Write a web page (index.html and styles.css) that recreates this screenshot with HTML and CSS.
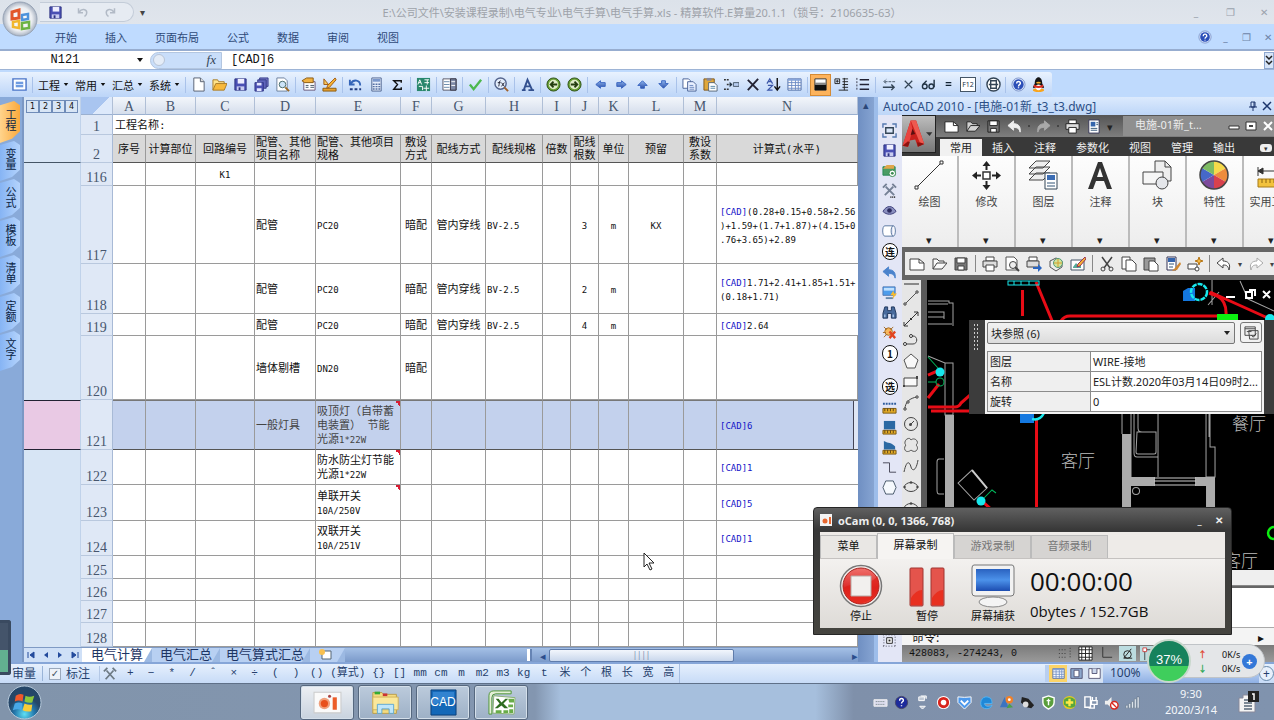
FILE: index.html
```html
<!DOCTYPE html>
<html lang="zh-CN">
<head>
<meta charset="utf-8">
<title>电气手算.xls - 精算软件.E算量</title>
<link rel="stylesheet" href="styles.css">
</head>
<body>
<svg class="defs" aria-hidden="true">
  <defs>
    <linearGradient id="g-blue" x1="0" y1="0" x2="0" y2="1"><stop offset="0" stop-color="#8fb6f0"/><stop offset="1" stop-color="#2c50a8"/></linearGradient>
    <linearGradient id="g-red" x1="0" y1="0" x2="0" y2="1"><stop offset="0" stop-color="#f0706c"/><stop offset=".55" stop-color="#dc2a28"/><stop offset="1" stop-color="#f04838"/></linearGradient>
    <linearGradient id="g-screen" x1="0" y1="0" x2="0" y2="1"><stop offset="0" stop-color="#2a62c0"/><stop offset=".5" stop-color="#4c92ea"/><stop offset="1" stop-color="#1c4cb0"/></linearGradient>
    <radialGradient id="g-orb"><stop offset="0" stop-color="#fff"/><stop offset=".7" stop-color="#eceef2"/><stop offset="1" stop-color="#a9b3c2"/></radialGradient>
    <radialGradient id="g-win" cy=".85"><stop offset="0" stop-color="#5fe0f4"/><stop offset=".6" stop-color="#2478ac"/><stop offset="1" stop-color="#254668"/></radialGradient>
  </defs>
  <symbol id="save" viewBox="0 0 16 16"><path d="M2 2h12v12H2z" fill="#4a50b4" stroke="#2d3280"/><path d="M5 2h7v5H5z" fill="#eef"/><path d="M4 10h8v4H4z" fill="#c8ccf0"/><path d="M6 11h2v3H6z" fill="#2d3280"/></symbol>
  <symbol id="saveall" viewBox="0 0 16 16"><path d="M6 1h9v9H6z" fill="#777cc8" stroke="#333a88"/><path d="M4 3h9v9H4z" fill="#6066bc" stroke="#333a88"/><path d="M1 6h9v9H1z" fill="#4a50b4" stroke="#333a88"/><path d="M3 6h5v3H3zM3 12h5v3H3z" fill="#e4e6ff"/></symbol>
  <symbol id="undo" viewBox="0 0 16 16"><path d="M2 3v6h6M3 8c3-5 10-4 10 1 0 2-1 4-3 5" fill="none" stroke="currentColor" stroke-width="2"/></symbol>
  <symbol id="redo" viewBox="0 0 16 16"><path d="M14 3v6H8M13 8C10 3 3 4 3 9c0 2 1 4 3 5" fill="none" stroke="currentColor" stroke-width="2"/></symbol>
  <symbol id="arrowundo" viewBox="0 0 16 16"><path d="M1 7l6-5v3c5 0 8 3 7 9-1-4-3-5-7-5v3z" fill="currentColor" stroke="currentColor" stroke-linejoin="round"/></symbol>
  <symbol id="arrowredo" viewBox="0 0 16 16"><path d="M15 7L9 2v3c-5 0-8 3-7 9 1-4 3-5 7-5v3z" fill="currentColor" stroke="currentColor" stroke-linejoin="round"/></symbol>
  <symbol id="lineundo" viewBox="0 0 16 16"><path d="M1 7l6-5v3c5 0 8 3 6 9-1-4-2-5-6-5v3z" fill="#fff" stroke="currentColor"/></symbol>
  <symbol id="lineredo" viewBox="0 0 16 16"><path d="M15 7L9 2v3c-5 0-8 3-6 9 1-4 2-5 6-5v3z" fill="#fff" stroke="currentColor"/></symbol>
  <symbol id="list" viewBox="0 0 16 16"><path d="M1 2h14v12H1z" fill="#fff" stroke="#4a74c8" stroke-width="1.5"/><path d="M4 5h8v6H4z" fill="#6f9be0"/><path d="M4 8h8" stroke="#dceaff"/></symbol>
  <symbol id="new" viewBox="0 0 16 16"><path d="M3 1h7l4 4v10H3z" fill="#fff" stroke="#555f70"/><path d="M10 1v4h4" fill="#ddd" stroke="#555f70"/></symbol>
  <symbol id="open" viewBox="0 0 16 16"><path d="M1 14V3h5l1 2h6v3" fill="#ffe48c" stroke="#a87b28"/><path d="M1 14l3-7h12l-3 7z" fill="#f8b93c" stroke="#a87b28"/></symbol>
  <symbol id="preview" viewBox="0 0 16 16"><path d="M2 1h8l3 3v11H2z" fill="#fff" stroke="#6b7f9c"/><circle cx="8" cy="8" r="3.5" fill="#cde4f8" stroke="#466"/><path d="M11 11l4 4" stroke="#9b6a28" stroke-width="2"/></symbol>
  <symbol id="c-preview" viewBox="0 0 16 16"><path d="M2 1h8l3 3v10H2z" fill="#fff" stroke="#555"/><circle cx="9" cy="9" r="3.5" fill="#eee" stroke="#444"/><path d="M11 11l4 4" stroke="#444" stroke-width="2"/></symbol>
  <symbol id="props" viewBox="0 0 16 16"><path d="M3 5h12v9H3z" fill="#fff" stroke="#657"/><path d="M1 4l5-3h7v5H4z" fill="#f0b040" stroke="#8a5a10"/><path d="M5 9h3m2 0h4M5 11h3m2 0h4" stroke="#456"/></symbol>
  <symbol id="design" viewBox="0 0 16 16"><path d="M2 2l5 6h-5z" fill="#f8c85c" stroke="#a05a10"/><path d="M1 12h14v3H1z" fill="#e8a02c" stroke="#8a5a10"/><path d="M14 1l-8 8-1 3 3-1 7-8z" fill="#f8b434" stroke="#a05a10"/></symbol>
  <symbol id="undodot" viewBox="0 0 16 16"><path d="M2 3v5h5M3 7c3-5 10-4 10 2" fill="none" stroke="#3565b8" stroke-width="2"/><path d="M2 13h12" stroke="#223c80" stroke-width="2" stroke-dasharray="3 2"/></symbol>
  <symbol id="calc" viewBox="0 0 16 16"><path d="M3 1h10v14H3z" fill="#e5ecfa" stroke="#4e6490"/><path d="M4 2h8v3H4z" fill="#7b98cc"/><path d="M5 7v7M8 7v7M11 7v7" stroke="#5670a4" stroke-width="2" stroke-dasharray="1.5 1"/></symbol>
  <symbol id="sigma" viewBox="0 0 16 16"><path d="M12 6V4H4l4 4-4 5h8v-2" fill="none" stroke="#111" stroke-width="1.500"/></symbol>
  <symbol id="translate" viewBox="0 0 16 16"><path d="M1 1h14v14H1z" fill="#29876c"/><path d="M2 8l2-5 2 5M3 6h2M9 3h5M9 6h5M12 3v5M3 10h4v4M8 12h6M11 9v6" stroke="#fff" fill="none"/></symbol>
  <symbol id="sheetlist" viewBox="0 0 16 16"><path d="M1 2h14v12H1z" fill="#fff" stroke="#556"/><path d="M9 2h6v12H9z" fill="#7e8aa8" stroke="#334"/><path d="M2 5h6M2 8h6M2 11h6" stroke="#68a"/><path d="M10 5h4M10 9h4" stroke="#fff"/></symbol>
  <symbol id="check" viewBox="0 0 16 16"><path d="M2 8l4 5 8-10" fill="none" stroke="#4cb84e" stroke-width="2.5"/></symbol>
  <symbol id="fxzoom" viewBox="0 0 16 16"><circle cx="7" cy="7" r="6" fill="#e4eefc" stroke="#54648c" stroke-width="1.5"/><path d="M11 11l4 4" stroke="#a0622c" stroke-width="2"/><path d="M7 4c-2 0-1 4-2 6M4 6h3M8 6l3 4M11 6l-3 4" stroke="#223" fill="none"/></symbol>
  <symbol id="fontA" viewBox="0 0 16 16"><path d="M2 14h4M9 14h6M4 14L8 3l5 11M5 10h6" fill="none" stroke="#33508f" stroke-width="2"/></symbol>
  <symbol id="prev" viewBox="0 0 16 16"><circle cx="8" cy="8" r="7" fill="#6aa136" stroke="#2c4e14"/><circle cx="8" cy="8" r="5" fill="#dfecc8"/><path d="M12 8H5m3-3L5 8l3 3" stroke="#243c10" stroke-width="2" fill="none"/></symbol>
  <symbol id="next" viewBox="0 0 16 16"><circle cx="8" cy="8" r="7" fill="#6aa136" stroke="#2c4e14"/><circle cx="8" cy="8" r="5" fill="#dfecc8"/><path d="M4 8h7M8 5l3 3-3 3" stroke="#243c10" stroke-width="2" fill="none"/></symbol>
  <symbol id="left" viewBox="0 0 16 16"><path d="M3 8l5-4v2h5v4H8v2z" fill="url(#g-blue)" stroke="#3863c0"/></symbol>
  <symbol id="right" viewBox="0 0 16 16"><path d="M13 8L8 4v2H3v4h5v2z" fill="url(#g-blue)" stroke="#3863c0"/></symbol>
  <symbol id="up" viewBox="0 0 16 16"><path d="M8 4l5 5h-3v3H6V9H3z" fill="url(#g-blue)" stroke="#3863c0"/></symbol>
  <symbol id="down" viewBox="0 0 16 16"><path d="M8 12l5-5h-3V4H6v3H3z" fill="url(#g-blue)" stroke="#3863c0"/></symbol>
  <symbol id="copy" viewBox="0 0 16 16"><path d="M1 2h6l2 2v8H1z" fill="#fff" stroke="#4a6296"/><path d="M6 5h6l3 3v7H6z" fill="#e8f0ff" stroke="#4a6296"/><path d="M8 9h4M8 11h5M8 13h5" stroke="#6a88c0"/></symbol>
  <symbol id="paste" viewBox="0 0 16 16"><path d="M1 2h11v12H1z" fill="#e0a83c" stroke="#80581c"/><path d="M4 1h5v3H4z" fill="#889"/><path d="M6 6h6l3 3v6H6z" fill="#fff" stroke="#567"/><path d="M8 10h5M8 12h5" stroke="#58a"/></symbol>
  <symbol id="insrow" viewBox="0 0 16 16"><path d="M0 3h6M0 13h6M3 8h6" stroke="#333" stroke-width="1.5" stroke-dasharray="2 1"/><path d="M6 5l3 3-3 3" fill="#234"/><path d="M10 6h6v4h-6z" fill="#b6ccf0" stroke="#456"/></symbol>
  <symbol id="cross" viewBox="0 0 16 16"><path d="M3 3l11 11M14 2L3 14" stroke="#223" stroke-width="2"/></symbol>
  <symbol id="sort" viewBox="0 0 16 16"><path d="M1 7l3-5 3 5M2 5h4M2 9h5l-5 5h5" fill="none" stroke="#3b56a8" stroke-width="1.3"/><path d="M12 1v12M9 10l3 4 3-4" fill="none" stroke="#111" stroke-width="1.5"/></symbol>
  <symbol id="grid" viewBox="0 0 16 16"><path d="M1 2h14v12H1z" fill="#fff" stroke="#4c6aa4"/><path d="M1 6h14M1 9h14M1 12h14M5 2v12M9 2v12M12 2v12" stroke="#6d8cc4"/><path d="M1 2h14v2H1z" fill="#86a4da"/></symbol>
  <symbol id="halves" viewBox="0 0 16 16"><path d="M2 2h12v12H2z" fill="#fff" stroke="#333"/><path d="M2 8h12v6H2z" fill="#111"/><path d="M2 6h12v2H2z" fill="#888"/></symbol>
  <symbol id="tree" viewBox="0 0 16 16"><path d="M1 2h5v5H1zM2 4.500h3M3.500 3v3M9 2h6M9 5h6M9 8h6M9 11h6M5 14h10M11 1v13" fill="none" stroke="#222"/></symbol>
  <symbol id="lines" viewBox="0 0 16 16"><path d="M5 3h10M5 8h10M5 13h10" stroke="#223" stroke-width="1.5"/><path d="M2 1v14" stroke="#334" stroke-dasharray="2 1.500"/></symbol>
  <symbol id="swap" viewBox="0 0 16 16"><path d="M15 5H3l3-3M3 5l3 2" fill="none" stroke="#456" stroke-dasharray="3 1"/><path d="M2 11h12M11 8l3 3-3 3" fill="none" stroke="#345" stroke-width="1.5"/></symbol>
  <symbol id="times" viewBox="0 0 16 16"><path d="M4 4l8 8M12 4l-8 8" stroke="#345" stroke-width="1.3"/></symbol>
  <symbol id="glasses" viewBox="0 0 16 16"><path d="M6 4L2 8M14 3v8" stroke="#234" stroke-width="1.5"/><circle cx="4" cy="10" r="2.500" fill="none" stroke="#234" stroke-width="1.500"/><circle cx="11" cy="10" r="2.500" fill="none" stroke="#234" stroke-width="1.500"/></symbol>
  <symbol id="equals" viewBox="0 0 16 16"><path d="M5 6h6M5 9h6" stroke="#123" stroke-width="1.300"/></symbol>
  <symbol id="calccirc" viewBox="0 0 16 16"><circle cx="8" cy="8" r="7" fill="#fff" stroke="#345" stroke-width="1.5"/><path d="M5 4h6v8H5zM3 8h10" fill="none" stroke="#345" stroke-width="1.500"/></symbol>
  <symbol id="help" viewBox="0 0 16 16"><circle cx="8" cy="8" r="7" fill="#d8e4fa" stroke="#8098cc"/><circle cx="8" cy="8" r="5.500" fill="#2c4fb8"/><path d="M6 7c0-3 4-3 4 0 0 1-2 1-2 3M8 11v1" stroke="#fff" stroke-width="1.500" fill="none"/></symbol>
  <symbol id="qq" viewBox="0 0 16 16"><ellipse cx="8" cy="14" rx="6" ry="2" fill="#f8a41c"/><path d="M4 7c0-9 8-9 8 0l2 4-1 1-2-1c-1 3-5 3-6 0l-2 1-1-1z" fill="#151515"/><ellipse cx="8" cy="11" rx="3" ry="3" fill="#fff"/><path d="M3 8c3 2 7 2 10 0v3c-3 1-7 1-10 0z" fill="#e02c20"/><ellipse cx="8" cy="6" rx="2.500" ry="1" fill="#f8b028"/></symbol>
  <symbol id="fit" viewBox="0 0 16 16"><path d="M1 5V1h4M11 1h4v4M15 11v4h-4M5 15H1v-4" fill="none" stroke="#567ab0" stroke-width="1.500"/><path d="M4 5h8v6H4z" fill="#dce8fa" stroke="#345" stroke-width="1.500"/></symbol>
  <symbol id="picadd" viewBox="0 0 16 16"><path d="M1 4h13v9H1z" fill="#4a9c64" stroke="#285"/><path d="M1 6l4-4h8v4z" fill="#e0a64c"/><circle cx="11" cy="11" r="3.500" fill="#fff" stroke="#3a8a50"/><circle cx="11" cy="11" r="1.500" fill="#3a8a50"/></symbol>
  <symbol id="tools" viewBox="0 0 16 16"><path d="M3 13L12 4M4 4l9 9M1 5l4-4M11 1l4 4" stroke="#758196" stroke-width="2"/><path d="M9 15h6" stroke="#222" stroke-width="2" stroke-dasharray="1 1"/></symbol>
  <symbol id="wrench" viewBox="0 0 16 16"><path d="M3 14L12 4M4 4l9 10M1 5l4-4M11 1l4 4" stroke="#6d7a84" stroke-width="2"/></symbol>
  <symbol id="eye" viewBox="0 0 16 16"><path d="M1 9c4-7 10-7 14 0-4 4-10 4-14 0z" fill="#8b90c0" stroke="#3a3c78"/><circle cx="8" cy="8" r="2.500" fill="#2c2c60"/></symbol>
  <symbol id="cyl" viewBox="0 0 16 16"><path d="M3 3h9c3 0 3 11 0 11H3C0 14 0 3 3 3zM12 3c-3 0-3 11 0 11" fill="#fff" stroke="#56749e"/></symbol>
  <symbol id="monitor" viewBox="0 0 16 16"><path d="M1 2h13v9H1z" fill="#4c9cec" stroke="#5079b4"/><path d="M2 3h11v3H2z" fill="#bfe0ff"/><path d="M4 14h8" stroke="#68a" stroke-width="2"/><path d="M12 6l-3 5h3l-1 4 5-6h-3z" fill="#f8bc2c"/></symbol>
  <symbol id="bino" viewBox="0 0 16 16"><path d="M3 2h3v4h4V2h3l2 7v5h-5V9H6v5H1V9z" fill="#486a9c" stroke="#1e355c"/><path d="M3 10v3M12 10v3" stroke="#a8c4e8" stroke-width="1.500"/></symbol>
  <symbol id="bugx" viewBox="0 0 16 16"><circle cx="7" cy="7" r="4" fill="#f8b85c" stroke="#a06a28"/><path d="M2 2l3 3M12 2L9 5M1 8h3M2 13l3-3" stroke="#a06a28"/><path d="M8 7l6 7M14 7l-6 7" stroke="#e24420" stroke-width="2.500"/></symbol>
  <symbol id="rulerd" viewBox="0 0 16 16"><path d="M1 4h14" stroke="#2d5b9c" stroke-width="2" stroke-dasharray="2 1"/><path d="M1 9h14v5H1z" fill="#e4ac28" stroke="#7a5810"/><path d="M3 9v3M6 9v3M9 9v3M12 9v3" stroke="#5a4010"/></symbol>
  <symbol id="rulerb" viewBox="0 0 16 16"><path d="M2 1h12v9H2z" fill="#2b69a4"/><path d="M1 11h14v4H1z" fill="#e4ac28" stroke="#7a5810"/><path d="M3 11v3M6 11v3M9 11v3M12 11v3" stroke="#5a4010"/></symbol>
  <symbol id="rulert" viewBox="0 0 16 16"><path d="M2 1c5 3 8 1 12 6v3H2z" fill="#2b69a4"/><path d="M1 11h14v4H1z" fill="#e4ac28" stroke="#7a5810"/><path d="M3 11v3M6 11v3M9 11v3M12 11v3" stroke="#5a4010"/></symbol>
  <symbol id="step" viewBox="0 0 16 16"><path d="M1 3h7v10h7" fill="none" stroke="#445"/></symbol>
  <symbol id="hex" viewBox="0 0 16 16"><path d="M4 1h8l3 7-3 7H4L1 8z" fill="#f6f9fd" stroke="#456"/></symbol>
  <symbol id="dotgrid" viewBox="0 0 16 16"><path d="M5 5h6v6H5z" fill="#fff" stroke="#222"/><path d="M1 2h14M1 14h14M2 1v14M14 1v14" stroke="#445" stroke-dasharray="1 2"/><path d="M8 7v2" stroke="#222" stroke-width="2"/></symbol>
  <symbol id="pline" viewBox="0 0 16 16"><path d="M2 14L14 2" stroke="#555"/><path d="M1 13h2v2H1zM13 1h2v2h-2z" fill="#fff" stroke="#444"/></symbol>
  <symbol id="ray" viewBox="0 0 16 16"><path d="M1 15L15 1M15 1h-4M15 1v4M1 15v-4M1 15h4" fill="none" stroke="#333"/><path d="M7 7h2v2H7z" fill="#333"/></symbol>
  <symbol id="poly" viewBox="0 0 16 16"><path d="M1 12h9c5 0 5-8 0-8H8" fill="none" stroke="#444"/><circle cx="2" cy="12" r="1.500" fill="#fff" stroke="#333"/><circle cx="8" cy="4" r="1.500" fill="#fff" stroke="#333"/></symbol>
  <symbol id="pent" viewBox="0 0 16 16"><path d="M8 1l7 6-3 8H4L1 7z" fill="#f8f8f8" stroke="#555"/></symbol>
  <symbol id="rect" viewBox="0 0 16 16"><path d="M1 4h13v8H1z" fill="#fafafa" stroke="#444"/><path d="M0 11h2v2H0zM13 2h2v3h-2z" fill="#444"/></symbol>
  <symbol id="arc" viewBox="0 0 16 16"><path d="M2 14C2 7 7 3 14 2" fill="none" stroke="#444"/><path d="M1 13h2v2H1zM13 1h2v2h-2zM4 6h2v2H4z" fill="#fff" stroke="#444"/></symbol>
  <symbol id="circ" viewBox="0 0 16 16"><circle cx="8" cy="8" r="6.500" fill="none" stroke="#444"/><path d="M7 9l4-4" stroke="#444"/><circle cx="7.500" cy="8.500" r="1.500" fill="#444"/></symbol>
  <symbol id="cloud" viewBox="0 0 16 16"><path d="M4 2c2-1 3-1 4 1 2-2 5-1 6 1 1 2 0 3-1 4 2 2 2 4 0 6-2 1-4 0-5-1-2 2-5 2-6 0-1-2 0-4 1-5-2-1-1-5 1-6z" fill="none" stroke="#555"/></symbol>
  <symbol id="spline" viewBox="0 0 16 16"><path d="M1 14C4 0 7 5 8 9s5 5 7-7" fill="none" stroke="#444"/></symbol>
  <symbol id="ell" viewBox="0 0 16 16"><ellipse cx="8" cy="8" rx="6.500" ry="4.500" fill="none" stroke="#444"/><circle cx="1.500" cy="8" r="1.200" fill="#444"/><circle cx="14.500" cy="8" r="1.200" fill="#444"/><circle cx="8" cy="3.500" r="1.200" fill="#444"/></symbol>
  <symbol id="c-new" viewBox="0 0 16 16"><path d="M1 3h9l5 4v7H1z" fill="#fff" stroke="currentColor"/><path d="M10 3v4h5" fill="none" stroke="currentColor"/></symbol>
  <symbol id="c-open" viewBox="0 0 16 16"><path d="M2 13V3h4l2 2h5v2M2 13l4-6h10l-5 6z" fill="#fff" stroke="currentColor" fill-opacity=".7"/></symbol>
  <symbol id="c-save" viewBox="0 0 16 16"><path d="M2 2h12v12H2z" fill="#777" stroke="currentColor"/><path d="M4 2h8v5H4zM5 10h6v4H5z" fill="#fff" stroke="currentColor"/></symbol>
  <symbol id="c-print" viewBox="0 0 16 16"><path d="M4 1h8v4H4z" fill="#fff" stroke="currentColor"/><path d="M1 5h14v6H1z" fill="#ddd" stroke="currentColor"/><path d="M4 9h8v6H4z" fill="#fff" stroke="currentColor"/></symbol>
  <symbol id="c-page" viewBox="0 0 16 16"><path d="M3 1h11v14H3z" fill="#fff" stroke="#335"/><path d="M5 3h5v5H5z" fill="#3464ac"/><path d="M11 4h2M11 6h2M5 10h7M5 12h7" stroke="#357"/></symbol>
  <symbol id="c-publish" viewBox="0 0 16 16"><path d="M3 1h8v4H3z" fill="#fff" stroke="#444"/><path d="M1 5h12v6H1z" fill="#ddd" stroke="#444"/><path d="M7 11h5V8l4 4-4 4v-3H7z" fill="#2c66c0"/></symbol>
  <symbol id="c-globe" viewBox="0 0 16 16"><path d="M2 5l6-3 6 3v6l-6 4-6-4z" fill="#eee" stroke="#555"/><circle cx="10" cy="7" r="4.500" fill="#cfe59c" stroke="#597"/><path d="M10 3v8M6 7h8" stroke="#d6a030"/></symbol>
  <symbol id="c-edit" viewBox="0 0 16 16"><path d="M1 4h13v10H1z" fill="#fff" stroke="#456"/><path d="M3 11l3-4 2 2 3-3v6H3z" fill="#5a9"/><path d="M15 1l-7 7-1 3 3-1 6-7z" fill="#f6b234" stroke="#935"/></symbol>
  <symbol id="c-cut" viewBox="0 0 16 16"><path d="M3 1l8 11M13 1L5 12" stroke="#444" stroke-width="1.500"/><circle cx="4" cy="13" r="2" fill="none" stroke="#444"/><circle cx="12" cy="13" r="2" fill="none" stroke="#444"/></symbol>
  <symbol id="c-copy" viewBox="0 0 16 16"><path d="M1 1h8v12H1z" fill="#fff" stroke="#444"/><path d="M5 4h6l4 4v7H5z" fill="#fff" stroke="#444"/></symbol>
  <symbol id="c-paste" viewBox="0 0 16 16"><path d="M1 2h11v12H1z" fill="#999" stroke="#444"/><path d="M6 5h5l4 4v6H6z" fill="#fff" stroke="#444"/></symbol>
  <symbol id="c-match" viewBox="0 0 16 16"><path d="M2 1h9v13H2z" fill="#fff" stroke="#335"/><path d="M3 2h7v4H3z" fill="#3464ac"/><path d="M4 8h5M4 11h4" stroke="#357"/><path d="M15 6l-5 6-3 3 5-1 4-6z" fill="#d08830"/></symbol>
  <symbol id="c-star" viewBox="0 0 16 16"><path d="M1 8h9v5H1z" fill="#fff" stroke="#444"/><circle cx="10" cy="13" r="2" fill="#fff" stroke="#444"/><path d="M12 1l1 3 3 1-3 1-1 3-1-3-3-1 3-1z" fill="#f8b83c" stroke="#b87818"/></symbol>
  <symbol id="caret" viewBox="0 0 8 6"><path d="M1 1h6L4 5z" fill="currentColor"/></symbol>
</svg>

<div class="app">
  <header class="titlebar">
    <div class="orb"><svg viewBox="0 0 36 36" width="36" height="36"><circle cx="18" cy="18" r="17" fill="url(#g-orb)" stroke="#98a4b6"/><path d="M10 11l7-2v8l-7 1z" fill="none" stroke="#e2572a" stroke-width="3"/><path d="M20 14l6-1v5l-6 1z" fill="none" stroke="#4e93dc" stroke-width="2.500"/><path d="M11 21l6-1v7l-6-1z" fill="none" stroke="#f1b62c" stroke-width="2.500"/><path d="M20 22l7-1v6l-7 1z" fill="none" stroke="#6bb344" stroke-width="2.500"/></svg></div>
    <div class="quick">
      <button class="ib" aria-label="保存"><svg><use href="#save"/></svg></button>
      <button class="ib faint" aria-label="撤销"><svg><use href="#undo"/></svg></button>
      <button class="ib faint" aria-label="恢复"><svg><use href="#redo"/></svg></button>
    </div>
    <button class="more" aria-label="自定义">▾</button>
    <h1>E:\公司文件\安装课程录制\电气专业\电气手算\电气手算.xls - 精算软件.E算量20.1.1（锁号：2106635-63）</h1>
    <div class="winbtns"><button aria-label="最小化">_</button><button aria-label="还原">❐</button><button aria-label="关闭">✕</button></div>
  </header>
  <nav class="menubar">
    <a href="#">开始</a><a href="#">插入</a><a href="#">页面布局</a><a href="#">公式</a><a href="#">数据</a><a href="#">审阅</a><a href="#">视图</a>
    <div class="winbtns inner"><button aria-label="帮助"><svg width="14" height="14"><use href="#help"/></svg></button><button aria-label="最小化">_</button><button aria-label="还原">❐</button><button aria-label="关闭">✕</button></div>
  </nav>
  <div class="formulabar">
    <input class="namebox" value="N121" aria-label="名称框">
    <svg class="nbarrow"><use href="#caret"/></svg>
    <div class="fx"><i></i><b>fx</b></div>
    <input class="formula" value="[CAD]6" aria-label="编辑栏">
    <button class="expand" aria-label="展开"><svg width="8" height="12"><path d="M1 2l3 3 3-3M1 7l3 3 3-3" fill="none" stroke="#222" stroke-width="1.500"/></svg></button>
  </div>
  <div class="toolbar">
    <div class="tools">
      <button class="ib" aria-label="列表"><svg><use href="#list"/></svg></button><span class="sep"></span>
      <button class="mb">工程<svg><use href="#caret"/></svg></button><button class="mb">常用<svg><use href="#caret"/></svg></button><button class="mb">汇总<svg><use href="#caret"/></svg></button><button class="mb">系统<svg><use href="#caret"/></svg></button><span class="sep"></span>
      <button class="ib" aria-label="新建"><svg><use href="#new"/></svg></button><button class="ib" aria-label="打开"><svg><use href="#open"/></svg></button><button class="ib" aria-label="保存"><svg><use href="#save"/></svg></button><button class="ib" aria-label="全部保存"><svg><use href="#saveall"/></svg></button><button class="ib" aria-label="预览"><svg><use href="#preview"/></svg></button><span class="sep"></span>
      <button class="ib" aria-label="属性"><svg><use href="#props"/></svg></button><button class="ib" aria-label="设计"><svg><use href="#design"/></svg></button><span class="sep"></span>
      <button class="ib" aria-label="回退"><svg><use href="#undodot"/></svg></button><button class="ib" aria-label="计算"><svg><use href="#calc"/></svg></button><button class="ib" aria-label="求和"><svg><use href="#sigma"/></svg></button><span class="sep"></span>
      <button class="ib" aria-label="转换"><svg><use href="#translate"/></svg></button><span class="sep"></span>
      <button class="ib" aria-label="表单"><svg><use href="#sheetlist"/></svg></button><span class="sep"></span>
      <button class="ib" aria-label="确认"><svg><use href="#check"/></svg></button><span class="sep"></span>
      <button class="ib" aria-label="公式查看"><svg><use href="#fxzoom"/></svg></button><span class="sep"></span>
      <button class="ib" aria-label="字体"><svg><use href="#fontA"/></svg></button><span class="sep"></span>
      <button class="ib" aria-label="上一个"><svg><use href="#prev"/></svg></button><button class="ib" aria-label="下一个"><svg><use href="#next"/></svg></button><span class="sep"></span>
      <button class="ib" aria-label="左移"><svg><use href="#left"/></svg></button><button class="ib" aria-label="右移"><svg><use href="#right"/></svg></button><button class="ib" aria-label="上移"><svg><use href="#up"/></svg></button><button class="ib" aria-label="下移"><svg><use href="#down"/></svg></button><span class="sep"></span>
      <button class="ib" aria-label="复制"><svg><use href="#copy"/></svg></button><button class="ib" aria-label="粘贴"><svg><use href="#paste"/></svg></button><button class="ib" aria-label="插入行"><svg><use href="#insrow"/></svg></button><button class="ib" aria-label="删除"><svg><use href="#cross"/></svg></button><button class="ib" aria-label="排序"><svg><use href="#sort"/></svg></button><button class="ib" aria-label="表格"><svg><use href="#grid"/></svg></button><span class="sep"></span>
      <button class="ib on" aria-label="反色"><svg><use href="#halves"/></svg></button><button class="ib" aria-label="分级"><svg><use href="#tree"/></svg></button><button class="ib" aria-label="行"><svg><use href="#lines"/></svg></button><span class="sep"></span>
      <button class="ib nr" aria-label="互换"><svg><use href="#swap"/></svg></button><button class="ib nr" aria-label="乘"><svg><use href="#times"/></svg></button><button class="ib nr" aria-label="查看"><svg><use href="#glasses"/></svg></button><button class="ib nr" aria-label="等于"><svg><use href="#equals"/></svg></button><button class="ib nr f12">F12</button><span class="sep"></span>
      <button class="ib nr" aria-label="计算器"><svg><use href="#calccirc"/></svg></button><span class="sep"></span>
      <button class="ib nr" aria-label="帮助"><svg><use href="#help"/></svg></button><button class="ib nr" aria-label="QQ"><svg><use href="#qq"/></svg></button>
    </div>
  </div>

  <main class="work">
    <aside class="sidetabs">
      <button class="st on">工程</button><button class="st">变量</button><button class="st">公式</button><button class="st">模板</button><button class="st">清单</button><button class="st">定额</button><button class="st">文字</button>
      <div class="meter"></div>
    </aside>

    <section class="sheet">
      <div class="gridwrap">
      <table class="cells">
        <colgroup><col class="w57"><col class="w32"><col class="w33"><col class="w50"><col class="w59"><col class="w61"><col class="w85"><col class="w31"><col class="w54"><col class="w57"><col class="w28"><col class="w28"><col class="w30"><col class="w55"><col class="w33"><col></colgroup>
        <thead><tr class="r18"><td class="ol levels"><div><button>1</button><button>2</button><button>3</button><button>4</button></div></td><th class="corner"></th><th>A</th><th>B</th><th>C</th><th>D</th><th>E</th><th>F</th><th>G</th><th>H</th><th>I</th><th>J</th><th>K</th><th>L</th><th>M</th><th>N</th></tr></thead>
        <tbody>
        <tr class="r20"><td class="ol"></td><th>1</th><td colspan="14" class="name">工程名称:</td></tr>
        <tr class="r28 cap"><td class="ol"></td><th>2</th><td>序号</td><td>计算部位</td><td>回路编号</td><td class="l">配管、其他项目名称</td><td class="l">配管、其他项目规格</td><td>敷设方式</td><td>配线方式</td><td>配线规格</td><td>倍数</td><td>配线根数</td><td>单位</td><td>预留</td><td>敷设系数</td><td>计算式(水平)</td></tr>
        <tr class="r23"><td class="ol"></td><th>116</th><td></td><td></td><td>K1</td><td></td><td></td><td></td><td></td><td></td><td></td><td></td><td></td><td></td><td></td><td></td></tr>
        <tr class="r78"><td class="ol"></td><th>117</th><td></td><td></td><td></td><td class="l cn">配管</td><td class="l">PC20</td><td class="cn">暗配</td><td class="cn">管内穿线</td><td class="l">BV-2.5</td><td></td><td>3</td><td>m</td><td>KX</td><td></td><td class="f"><b>[CAD]</b>(0.28+0.15+0.58+2.56<br>)+1.59+(1.7+1.87)+(4.15+0<br>.76+3.65)+2.89</td></tr>
        <tr class="r50"><td class="ol"></td><th>118</th><td></td><td></td><td></td><td class="l cn">配管</td><td class="l">PC20</td><td class="cn">暗配</td><td class="cn">管内穿线</td><td class="l">BV-2.5</td><td></td><td>2</td><td>m</td><td></td><td></td><td class="f"><b>[CAD]</b>1.71+2.41+1.85+1.51+<br>(0.18+1.71)</td></tr>
        <tr class="r22"><td class="ol"></td><th>119</th><td></td><td></td><td></td><td class="l cn">配管</td><td class="l">PC20</td><td class="cn">暗配</td><td class="cn">管内穿线</td><td class="l">BV-2.5</td><td></td><td>4</td><td>m</td><td></td><td></td><td class="f"><b>[CAD]</b>2.64</td></tr>
        <tr class="r64"><td class="ol"></td><th>120</th><td></td><td></td><td></td><td class="l cn">墙体剔槽</td><td class="l">DN20</td><td class="cn">暗配</td><td></td><td></td><td></td><td></td><td></td><td></td><td></td><td></td></tr>
        <tr class="r50 sel"><td class="ol"></td><th>121</th><td></td><td></td><td></td><td class="l cn">一般灯具</td><td class="l cn note">吸顶灯（自带蓄<br>电装置） 节能<br>光源<span>1*22W</span></td><td></td><td></td><td></td><td></td><td></td><td></td><td></td><td></td><td class="f"><b>[CAD]6</b></td></tr>
        <tr class="r35"><td class="ol"></td><th>122</th><td></td><td></td><td></td><td></td><td class="l cn note">防水防尘灯节能<br>光源<span>1*22W</span></td><td></td><td></td><td></td><td></td><td></td><td></td><td></td><td></td><td class="f"><b>[CAD]1</b></td></tr>
        <tr class="r36"><td class="ol"></td><th>123</th><td></td><td></td><td></td><td></td><td class="l cn note">单联开关<br><span>10A/250V</span></td><td></td><td></td><td></td><td></td><td></td><td></td><td></td><td></td><td class="f"><b>[CAD]5</b></td></tr>
        <tr class="r35"><td class="ol"></td><th>124</th><td></td><td></td><td></td><td></td><td class="l cn">双联开关<br><span>10A/251V</span></td><td></td><td></td><td></td><td></td><td></td><td></td><td></td><td></td><td class="f"><b>[CAD]1</b></td></tr>
        <tr class="r23"><td class="ol"></td><th>125</th><td></td><td></td><td></td><td></td><td></td><td></td><td></td><td></td><td></td><td></td><td></td><td></td><td></td><td></td></tr>
        <tr class="r22"><td class="ol"></td><th>126</th><td></td><td></td><td></td><td></td><td></td><td></td><td></td><td></td><td></td><td></td><td></td><td></td><td></td><td></td></tr>
        <tr class="r22"><td class="ol"></td><th>127</th><td></td><td></td><td></td><td></td><td></td><td></td><td></td><td></td><td></td><td></td><td></td><td></td><td></td><td></td></tr>
        <tr class="r24"><td class="ol"></td><th>128</th><td></td><td></td><td></td><td></td><td></td><td></td><td></td><td></td><td></td><td></td><td></td><td></td><td></td><td></td></tr>
        </tbody>
      </table>
      </div>
      <div class="sheetbar">
        <div class="sheetnav"><button aria-label="首个"><svg width="8" height="8"><path d="M1 1v6M7 1L3 4l4 3z" fill="#234a9c" stroke="#234a9c"/></svg></button><button aria-label="上一个"><svg width="8" height="8"><path d="M6 1L2 4l4 3z" fill="#234a9c"/></svg></button><button aria-label="下一个"><svg width="8" height="8"><path d="M2 1l4 3-4 3z" fill="#234a9c"/></svg></button><button aria-label="末个"><svg width="8" height="8"><path d="M7 1v6M1 1l4 3-4 3z" fill="#234a9c" stroke="#234a9c"/></svg></button></div>
        <a href="#" class="tab on">电气计算</a><a href="#" class="tab">电气汇总</a><a href="#" class="tab wide">电气算式汇总</a><a href="#" class="tab add" aria-label="新工作表"><svg width="16" height="12"><path d="M4 3h9v8H4z" fill="#fff" stroke="#567"/><circle cx="4" cy="4" r="3" fill="#f8c050"/></svg></a>
        <div class="hscroll"><i class="grip"></i><i class="ar">◂</i><i class="thumb">||||</i><i class="ar">▸</i></div>
      </div>
    </section>
    <div class="vscroll">▴</div>

    <section class="cadpane">
      <div class="panetitle"><h2>AutoCAD 2010 - [电施-01新_t3_t3.dwg]</h2><button aria-label="固定"><svg width="10" height="10"><path d="M3 1h4v5H3zM1 6h8M5 6v4M6 1v5" fill="none" stroke="#1c356c"/></svg></button><button aria-label="关闭"><svg width="10" height="10"><path d="M1 1l8 8M9 1L1 9" stroke="#1c356c" stroke-width="1.500"/></svg></button></div>
      <div class="panebody">
        <div class="strip">
          <svg><use href="#fit"/></svg><svg><use href="#save"/></svg><svg><use href="#picadd"/></svg><svg><use href="#tools"/></svg><svg><use href="#eye"/></svg><svg><use href="#cyl"/></svg><button class="rnd">连</button><svg class="blue"><use href="#arrowundo"/></svg><svg><use href="#monitor"/></svg><svg><use href="#bino"/></svg><svg><use href="#bugx"/></svg><button class="rnd">1</button><hr><button class="rnd">选</button><svg><use href="#rulerd"/></svg><svg><use href="#rulerb"/></svg><svg><use href="#rulert"/></svg><svg><use href="#step"/></svg><svg><use href="#hex"/></svg>
          <svg class="last"><use href="#dotgrid"/></svg>
        </div>
        <div class="cad">
          <div class="cadtop">
            <button class="alogo" aria-label="应用程序菜单"><svg viewBox="0 0 40 38"><path d="M4 32L13 4l6 0 9 26-7 3-3-8-6 1-2 7z" fill="#c8201c"/><path d="M13 4l6 0 9 26-5-2z" fill="#ee5a50"/><path d="M4 32L13 4l2 10-5 19z" fill="#e84440"/><path d="M13 20l2-7 3 6z" fill="#5a1010"/><path d="M4 32l6-5 2 1-2 5zM21 33l-1-5 5 1 3 1z" fill="#8e1210"/><path d="M30 17h7l-3 4z" fill="#333"/></svg></button>
            <svg><use href="#c-new"/></svg><svg><use href="#c-open"/></svg><svg><use href="#c-save"/></svg><svg class="w"><use href="#arrowundo"/></svg><i></i><svg class="g"><use href="#arrowredo"/></svg><i></i><svg><use href="#c-print"/></svg><svg><use href="#c-page"/></svg><span class="dd">▾</span>
            <div class="docname">电施-01新_t...</div>
            <div class="cwb"><svg viewBox="0 0 12 12"><path d="M1 6h10v3H1z" fill="#fff" stroke="#333"/></svg><svg viewBox="0 0 12 12"><path d="M1 2h10v8H1z" fill="#fff" stroke="#333"/><path d="M4 5h4v2H4z" fill="#444"/></svg><svg viewBox="0 0 12 12"><path d="M2 2l8 8M10 2l-8 8" stroke="#fff" stroke-width="2"/></svg></div>
          </div>
          <nav class="cadtabs"><a class="on" href="#">常用</a><a href="#">插入</a><a href="#">注释</a><a href="#">参数化</a><a href="#">视图</a><a href="#">管理</a><a href="#">输出</a><button aria-label="更多">▾</button></nav>
          <div class="ribbon">
            <button><svg viewBox="0 0 32 32"><path d="M4 28L28 4" stroke="#333"/><path d="M2 27h3v3H2zM27 2h3v3h-3z" fill="#fff" stroke="#333"/></svg>绘图<i>▾</i></button>
            <button><svg viewBox="0 0 32 32"><path d="M13 13h7v7h-7z" fill="#fff" stroke="#333" stroke-width="1.500"/><path d="M16.500 2l4 5h-3v4h-2V7h-3zM16.500 31l4-5h-3v-4h-2v4h-3zM2 16.500l5-4v3h4v2H7v3zM31 16.500l-5-4v3h-4v2h4v3z" fill="#222"/></svg>修改<i>▾</i></button>
            <button><svg viewBox="0 0 32 32"><path d="M9 2h14l-7 7H2zM9 8h14l-7 7H2zM9 14h14l-7 7H2z" fill="#eee" stroke="#444"/><path d="M18 14h12v16H18z" fill="#fff" stroke="#345"/><path d="M20 16h8v5h-8z" fill="#3a6cb4"/><path d="M20 24h8M20 27h8" stroke="#357"/></svg>图层<i>▾</i></button>
            <button><svg viewBox="0 0 32 32"><path d="M4 30L14 3h4l10 27h-5l-3-8h-8l-3 8zM13 18h6l-3-9z" fill="#333" fill-rule="evenodd"/></svg>注释<i>▾</i></button>
            <button><svg viewBox="0 0 32 32"><path d="M14 2h10l6 6v14H14z" fill="#eee" stroke="#444"/><path d="M24 2v6h6" fill="none" stroke="#444"/><path d="M2 13h20v12H2z" fill="#f6f6f6" stroke="#444"/><circle cx="21" cy="24" r="6" fill="#e4e6ea" stroke="#444"/></svg>块<i>▾</i></button>
            <button><svg viewBox="0 0 32 32"><path d="M16 16L16 2A14 14 0 0 1 28 9z" fill="#f6da4a"/><path d="M16 16L28 9A14 14 0 0 1 28 23z" fill="#ee8c3c"/><path d="M16 16L28 23A14 14 0 0 1 16 30z" fill="#d8414c"/><path d="M16 16V30A14 14 0 0 1 4 23z" fill="#7c4a9c"/><path d="M16 16L4 23A14 14 0 0 1 4 9z" fill="#4668c8"/><path d="M16 16L4 9A14 14 0 0 1 16 2z" fill="#7ebc64"/><circle cx="16" cy="16" r="14" fill="none" stroke="#444" stroke-width="1.500"/></svg>特性<i>▾</i></button>
            <button><svg viewBox="0 0 32 32"><path d="M3 8v9M3 12h29M3 12l5-3v6z" stroke="#333" fill="#333"/><path d="M3 20h29v8H3z" fill="#f2c23c" stroke="#a67a18"/><path d="M7 20v4M11 20v4M15 20v4M19 20v4M23 20v4M27 20v4" stroke="#8a6410"/></svg>实用工具<i>▾</i></button>
          </div>
          <div class="cadtools">
            <div><svg><use href="#c-new"/></svg><svg><use href="#c-open"/></svg><svg><use href="#c-save"/></svg><s></s><svg><use href="#c-print"/></svg><svg><use href="#c-preview"/></svg><svg><use href="#c-publish"/></svg><svg><use href="#c-globe"/></svg><svg><use href="#c-edit"/></svg><s></s><svg><use href="#c-cut"/></svg><svg><use href="#c-copy"/></svg><svg><use href="#c-paste"/></svg><svg><use href="#c-match"/></svg><svg><use href="#c-star"/></svg><s></s><svg><use href="#lineundo"/></svg><i>▾</i><svg class="g"><use href="#lineredo"/></svg><i>▾</i><s></s></div>
          </div>
          <div class="drawrow">
            <div class="drawstrip"><i></i><svg><use href="#pline"/></svg><svg><use href="#ray"/></svg><svg><use href="#poly"/></svg><svg><use href="#pent"/></svg><svg><use href="#rect"/></svg><svg><use href="#arc"/></svg><svg><use href="#circ"/></svg><svg><use href="#cloud"/></svg><svg><use href="#spline"/></svg><svg><use href="#ell"/></svg><svg><use href="#ell"/></svg></div>
            <div class="canvas">
              <svg class="plan" viewBox="927 280 347 290" preserveAspectRatio="xMinYMin slice">
                <g fill="none" stroke="#a4a4a4"><path d="M928 301h21v2h4v23M928 304h20M928 312h16v7M928 317h16M928 324h24"/><path d="M928 356l17 7h8v52h-8v-52M944 459h-5q-2 0-2 3v28q0 4 2 4h5M958 483l14-13 15 18-13 12z"/><path d="M1122 413v21M1131 413v64M1134 413v40q0 4 3 4h21M1158 413v64M1137 432h19v20q0 2-2 2h-16q-2 0-2-2zM1138 413v15q0 4 4 4h12M1206 413v64h9v-30h-5v-34M1209 413v24"/><path d="M1240 281l8 18 26 12M1212 280v25M1208 305l11-13"/><circle cx="1136" cy="491" r="3.500"/></g>
                <g fill="#ababab"><path d="M945 415h9v95h-9zM1122 434h9v80h-9zM1131 477h24v9h-24zM1195 477h20v9h-20zM1206 477h9v34h-9z"/></g>
                <path d="M1154 478h42M1154 481h42M1154 485h42" stroke="#ccc"/><path d="M972 470l15 18" stroke="#ccc" stroke-width="2"/>
                <g fill="none" stroke="#e80c16" stroke-width="3"><path d="M1022.500 290v26M1036 282l17 41M1061 321q3-5 9-5h148M1209 293l8 3q10 5 9 20M1210 292l60 27M928 375l9-4M928 398l11-14M928 407h27q4 0 6-4l9-8M931 411h40M1036.500 420v100M983 502l8 7"/></g>
                <path d="M1217 314h21v7h-21z" fill="#0cf010"/><path d="M1008 281h31v4h-31zM1014 281v4M1021 281v4M1029 281v4" fill="none" stroke="#18e8ec"/>
                <path d="M1188 288h7v13h-12v-10z M1020 414h14v9h-14z" fill="#1478e0"/><circle cx="1199" cy="292" r="8" fill="none" stroke="#18e8ec" stroke-width="2.500" stroke-dasharray="5 1"/><path d="M1032 419q8 2 12-6" fill="none" stroke="#18e8ec" stroke-width="2.500"/>
                <g fill="#18e8ec"><circle cx="940" cy="372" r="4.500"/><circle cx="981" cy="501" r="4.500"/><circle cx="1270" cy="319" r="5"/></g>
                <g fill="none" stroke="#00b85c"><path d="M928 357l10 11M928 382h8M984 498l8-8 4 3"/><circle cx="940" cy="382" r="4"/></g><circle cx="1274" cy="533" r="6" fill="none" stroke="#0cf010" stroke-width="2.500"/>
                <g class="room"><text x="1061" y="467">客厅</text><text x="1232" y="430">餐厅</text><text x="1224" y="567">客厅</text></g>
                <g fill="none" stroke="#fff" stroke-width="2"><path d="M1226 297h9M1246 292h6v6h-6zM1249 290h6v6M1263 291l7 7M1270 291l-7 7"/></g>
              </svg>
              <div class="palette">
                <i class="pgrip"></i>
                <div class="pbody">
                  <div class="ptop"><select aria-label="对象类型"><option>块参照 (6)</option></select><svg class="parr"><use href="#caret"/></svg><button aria-label="快捷特性"><svg viewBox="0 0 16 16" width="15" height="15"><path d="M1 2h11v9H1zM1 4h11M3 7h5M5 6h10v9H6z" fill="#eee" stroke="#444"/><path d="M8 11l2 2 3-4" fill="none" stroke="#333"/></svg></button></div>
                  <table><tr><th>图层</th><td>WIRE-接地</td></tr><tr><th>名称</th><td>ESL计数.2020年03月14日09时2...</td></tr><tr><th>旋转</th><td>0</td></tr></table>
                </div>
                <i class="pend"></i>
              </div>
            </div>
          </div>
          <div class="modeltabs"></div>
          <div class="cmdlog"></div>
          <div class="cmd"><label>命令:<input aria-label="命令行"></label><span>▸</span></div>
          <div class="cadstatus"><span>428083, -274243, 0</span><svg viewBox="0 0 16 16"><path d="M2 4h9M2 8h9M2 12h9M14 2v12" stroke="#333" stroke-dasharray="1 2"/></svg><svg viewBox="0 0 16 16"><path d="M1 1h14v14H1zM4 1v14M8 1v14M12 1v14M1 4h14M1 8h14M1 12h14" fill="#fff" stroke="#222"/></svg><svg viewBox="0 0 16 16"><path d="M4 1v11h10" fill="none" stroke="#333"/></svg><svg class="lit" viewBox="0 0 16 16"><path d="M4 13L12 3M4 13h9" stroke="#222"/><circle cx="8" cy="9" r="4" fill="none" stroke="#222"/></svg><svg class="lit" viewBox="0 0 16 16"><path d="M4 15V4h10" fill="none" stroke="#444"/><path d="M2 2h4v4H2z" fill="#fff" stroke="#c44"/></svg></div>
        </div>
      </div>
    </section>
  </main>

  <div class="statusbar">
    <span class="rev">审量</span><label class="chk"><input type="checkbox" checked>标注</label><svg class="wr"><use href="#wrench"/></svg>
    <div class="syms"><button>+</button><button>−</button><button>*</button><button>/</button><button>ˆ</button><button>×</button><button>÷</button><button>(</button><button>)</button><button>()</button><button class="two">(算式)</button><button>{}</button><button>[]</button><button>mm</button><button>cm</button><button>m</button><button>m2</button><button>m3</button><button>kg</button><button>t</button><button>米</button><button>个</button><button>根</button><button>长</button><button>宽</button><button>高</button></div>
    <div class="views"><button class="on" aria-label="普通"><svg><use href="#grid"/></svg></button><button aria-label="页面"><svg viewBox="0 0 16 16"><path d="M1 2h14v12H1z" fill="#8ea8cc" stroke="#446"/><path d="M5 4h6v8H5z" fill="#fff" stroke="#446"/></svg></button><button aria-label="分页"><svg viewBox="0 0 16 16"><path d="M1 2h14v12H1z" fill="#fff" stroke="#446"/><path d="M5 2v6h6V2" fill="#ccd8ec" stroke="#446"/></svg></button></div>
    <span class="zoom">100%</span><button class="plus" aria-label="放大">+</button>
  </div>

  <footer class="taskbar">
    <button class="start" aria-label="开始"><svg viewBox="0 0 36 36"><circle cx="18" cy="18" r="17" fill="url(#g-win)" stroke="#b9cbdc"/><path d="M9 11q4-3 8-1l-1 7q-4-2-8 0z" fill="#f0582c"/><path d="M19 11q4 2 9 0l-2 7q-4 1-8-1z" fill="#8cc83c"/><path d="M8 19q4-2 8 0l-1 7q-4-2-9 0z" fill="#48a8e8"/><path d="M18 19q4 2 8 1l-1 7q-5 1-9-1z" fill="#f8cc38"/></svg></button>
    <div class="apps">
      <button class="hot" aria-label="oCam"><svg viewBox="0 0 28 26"><path d="M1 3h26v20H1z" fill="#fafafa" stroke="#ccc"/><circle cx="11" cy="14" r="5.500" fill="#f0a07c"/><circle cx="11" cy="14" r="3.500" fill="#e8501c"/><path d="M19 8h4v12h-4z" fill="#ec5c28"/><circle cx="16" cy="7" r="1.500" fill="#a44"/></svg></button>
      <button aria-label="资源管理器"><svg viewBox="0 0 32 28"><path d="M2 3h10l2 2h14v21H2z" fill="#f4dc80" stroke="#b89a48"/><path d="M4 2h6v3H4z" fill="#3a3"/><path d="M13 4h5v3h-5z" fill="#c33"/><path d="M2 8h28v14H2z" fill="#fae89c" stroke="#d0b058"/><path d="M7 16h18v10h-5v-5h-8v5H7z" fill="#bfe6fa" stroke="#58a4d0"/></svg></button>
      <button aria-label="CAD"><svg viewBox="0 0 28 28"><path d="M1 1h26v26H1z" fill="#1468b8" stroke="#0c4078"/><path d="M3 3h22v6L3 16z" fill="#4696e0" opacity=".6"/></svg><b>CAD</b></button>
      <button aria-label="Excel"><svg viewBox="0 0 30 28"><path d="M2 26V7q0-5 5-5h18v3H9q-4 0-4 4v17z" fill="#e4f0d8" stroke="#4e9634"/><path d="M7 7l22 2-1 17-22-1z" fill="#fff" stroke="#88b070"/><path d="M9 10l3 0 3 4 4-4h3l-5 5 5 5h-4l-3-3-4 3H8l5-5z" fill="#2e6c20"/><path d="M22 10h6v4h-5zM22 16h5v3h-5zM9 22h6v3H9zM17 22h5v3h-5zM23 21h4v4h-4z" fill="#68ac48"/></svg></button>
    </div>
    <div class="tray">
      <svg viewBox="0 0 16 16"><path d="M1 5h14v7H1z" fill="#dde" stroke="#eee"/><path d="M3 7h10M3 10h10" stroke="#677" stroke-dasharray="1 1"/></svg>
      <svg viewBox="0 0 16 16"><circle cx="8" cy="8" r="6.500" fill="#1c2a9c" stroke="#446"/><path d="M6 6c0-3 4-3 4 0 0 1-2 1-2 3M8 11v1" stroke="#fff" stroke-width="1.500" fill="none"/></svg>
      <svg viewBox="0 0 16 16"><path d="M4 2h6v4H4zM6 1h6v3M5 12h6l-3 3z" fill="#fff" stroke="#fff" fill-opacity=".5"/></svg>
      <svg viewBox="0 0 16 16"><circle cx="8" cy="8" r="7" fill="#fff"/><circle cx="8" cy="8" r="4.500" fill="none" stroke="#d8241c" stroke-width="3"/></svg>
      <svg viewBox="0 0 16 16"><path d="M8 15L1 8V2q7 1 14 0v6z" fill="#4c98ec" stroke="#fff"/><path d="M4 6l4 4 4-4" stroke="#fff" stroke-width="2" fill="none"/></svg>
      <svg viewBox="0 0 16 16"><path d="M14 4C8-1 2 4 3 10c1 6 10 6 12 1-4 2-8 1-8-2h8c0-3-1-4-1-5z" fill="#1e88d8" stroke="#58b4f0"/></svg>
      <svg viewBox="0 0 16 16"><path d="M1 13L6 2l4 11" fill="#3c74c0"/><circle cx="11" cy="5" r="4" fill="#f08028"/><path d="M8 14l3-5 4 4z" fill="#4ca048"/><circle cx="11" cy="5" r="1.500" fill="#fff"/></svg>
      <svg viewBox="0 0 16 16"><path d="M2 2l7 2 6 7-3 3-5-1-6-5z" fill="#222"/><circle cx="6" cy="10" r="3" fill="#ddd"/></svg>
      <svg viewBox="0 0 16 16"><path d="M8 1l6 2v5q0 4-6 7-6-3-6-7V3z" fill="#5a9e3c" stroke="#fff" stroke-width="1.500"/><path d="M8 4v7M6 6h4" stroke="#fff" stroke-width="1.500"/></svg>
      <svg viewBox="0 0 16 16"><circle cx="8" cy="8" r="7" fill="#e8cc20"/><path d="M2 5q6-5 12 0v7q-6 4-12-2z" fill="#58a83c"/><path d="M8 4v8M4 8h8" stroke="#ffe848" stroke-width="2.500"/></svg>
      <svg viewBox="0 0 16 16"><path d="M2 2h6v11H2zM10 2v4M14 2v4M9 6h6v4h-6zM12 10v4H6" fill="none" stroke="#fff" stroke-width="1.500"/></svg>
      <svg viewBox="0 0 16 16"><path d="M1 6h3l4-4v12l-4-4H1z" fill="#eee"/><circle cx="11" cy="11" r="4" fill="#fff" stroke="#d8281c" stroke-width="1.500"/><path d="M8 8l6 6" stroke="#d8281c" stroke-width="1.500"/></svg>
      <svg viewBox="0 0 16 16"><path d="M1 11h2v3H1zM4 9h2v5H4zM7 7h2v7H7zM10 4h2v10h-2zM13 2h2v12h-2z" fill="#e8edf4" stroke="#567" stroke-width=".5"/></svg>
      <div class="clock"><time>9:30</time><time>2020/3/14</time></div>
      <svg class="ac" viewBox="0 0 24 24"><path d="M3 8h4V5h12v17H3z" fill="#f4f4f4" stroke="#889"/><path d="M8 10h8M8 13h8M8 16h8M8 19h8" stroke="#567" stroke-width="1.500"/><path d="M12 1h11v11H12z" fill="#222"/><path d="M16 4h2v6" fill="none" stroke="#fff" stroke-width="1.500"/></svg>
    </div>
  </footer>
</div>

<section class="ocam">
  <header><svg width="12" height="12" viewBox="0 0 12 12"><path d="M0 0h12v12H0z" fill="#f4f4f4"/><circle cx="5" cy="7" r="2.500" fill="#e86830"/><path d="M9 3h2v7H9z" fill="#e86830"/></svg><h2>oCam (0, 0, 1366, 768)</h2><button aria-label="最小化">_</button><button aria-label="关闭">✕</button></header>
  <nav><button>菜单</button><button class="on">屏幕录制</button><button class="off">游戏录制</button><button class="off">音频录制</button></nav>
  <div class="obody">
    <button><svg viewBox="0 0 44 44"><circle cx="22" cy="22" r="20.500" fill="#f6f0ee" stroke="#777" stroke-width="1.500"/><circle cx="22" cy="22" r="18" fill="url(#g-red)" stroke="#a82420"/><path d="M4 24q12-6 18-4t17-8q4 20-12 26T4 24z" fill="#e01c14" opacity=".6"/><path d="M12 12h20v20H12z" fill="#f2f0ee" stroke="#b8a8a4"/></svg>停止</button>
    <button><svg viewBox="0 0 44 44"><path d="M6 4h11q1 0 1 1v36q0 1-1 1H6q-1 0-1-1V5q0-1 1-1zM27 4h11q1 0 1 1v36q0 1-1 1H27q-1 0-1-1V5q0-1 1-1z" fill="#e4544c" stroke="#a03430"/><path d="M6 34q5-8 11-8v15H6zM27 34q5-8 11-8v15H27z" fill="#e83020"/></svg>暂停</button>
    <button><svg viewBox="0 0 44 44"><ellipse cx="22" cy="38" rx="14" ry="5" fill="#f4f4f4" stroke="#888"/><path d="M3 1h38q2 0 2 3v25q0 3-3 3H4q-3 0-3-3V4q0-3 2-3z" fill="#f2f2f2" stroke="#777"/><path d="M5 5h34v22H5z" fill="url(#g-screen)"/></svg>屏幕捕获</button>
    <div class="read"><strong>00:00:00</strong><span>0bytes / 152.7GB</span></div>
  </div>
</section>

<section class="netball"><b>37%</b><div class="rates"><span><i class="u">↑</i>0K/s</span><span><i class="d">↓</i>0K/s</span></div><button aria-label="加速">+</button></section>
<svg class="cursor" viewBox="0 0 12 19"><path d="M1 1v14l3-3 3 6 2-1-3-6h5z" fill="#fff" stroke="#222"/></svg>
</body>
</html>
```
FILE: styles.css
```css
* { box-sizing: border-box; }
body { margin: 0; height: 100vh; overflow: hidden; font-family: "Noto Sans", "Noto Sans CJK SC", sans-serif; font-size: 11px; color: #111; }
button, input, select { font: inherit; color: inherit; border: 0; background: none; padding: 0; margin: 0; }
button, a { white-space: nowrap; }
a { color: inherit; text-decoration: none; }
h1, h2 { margin: 0; font-weight: 400; }
i, s { font-style: normal; text-decoration: none; }
svg { display: block; flex: none; overflow: hidden; }
.defs { position: absolute; width: 0; height: 0; }
.app { height: 100%; display: flex; flex-direction: column; background: #bfdbff; }

.titlebar { height: 24px; flex: none; display: flex; align-items: center; position: relative; background: linear-gradient(#dce2ea, #e0e5ec); padding-left: 40px; }
.orb { position: absolute; left: 2px; top: 1px; z-index: 2; }
.quick { height: 20px; width: 94px; display: flex; align-items: center; gap: 6px; padding-left: 5px; border: 1px solid #c3ccd8; border-left: 0; border-radius: 0 10px 10px 0; background: #e6ebf2; }
.ib { width: 21px; height: 22px; display: flex; align-items: center; justify-content: center; flex: none; }
.ib svg { width: 15px; height: 15px; }
.faint { color: #b2bac6; }
.faint svg { width: 12px; height: 12px; }
.more { width: 16px; color: #444; font-size: 10px; }
.titlebar h1 { flex: 1; text-align: center; color: #9da2a9; font-size: 11px; white-space: nowrap; padding-right: 56px; }
.winbtns { display: flex; gap: 22px; color: #9aa2ad; padding-right: 4px; }
.winbtns button { width: 12px; font-size: 10px; }
.menubar { height: 27px; flex: none; display: flex; align-items: center; gap: 28px; padding-left: 55px; color: #2f4a78; background: #bfdbff; border-bottom: 2px solid #97add0; }
.inner { margin-left: auto; gap: 8px; color: #6e84a8; padding-right: 0; }
.menubar .winbtns button { width: 13px; }
.formulabar { height: 19px; flex: none; display: flex; align-items: center; background: #fff; border-bottom: 1px solid #9db4d6; font-family: "Liberation Mono", monospace; font-size: 12px; }
.namebox { width: 130px; text-align: center; }
.nbarrow { width: 8px; height: 6px; margin: 0 6px; }
.fx { width: 72px; height: 17px; background: #c9defa; border-radius: 9px 0 0 9px; border: 1px solid #b3c6e0; display: flex; align-items: center; justify-content: space-between; padding: 0 5px 0 2px; font: italic 13px "Liberation Serif", serif; }
.fx i { width: 12px; height: 12px; border-radius: 6px; background: #e4ecf7; border: 1px solid #b8c4d6; }
.fx b { font-weight: 400; color: #345; }
.formula { flex: 1; padding-left: 9px; }
.expand { width: 10px; height: 17px; background: #d6e4f8; border: 1px solid #8da7cf; }
.toolbar { height: 27px; flex: none; background: #bfdafd; padding-top: 2px; }
.tools { width: 1052px; height: 25px; display: flex; align-items: center; padding-left: 9px; background: linear-gradient(#e9f2fe, #d2e3fb 50%, #bcd5f8); border-radius: 0 3px 3px 0; }
.sep { width: 1px; height: 16px; margin: 0 2px; background: #a9c2ea; flex: none; }
.mb { width: 37px; display: flex; align-items: center; justify-content: center; gap: 3px; }
.mb svg { width: 6px; height: 5px; }
.on.ib { background: #fdb35c; border: 1px solid #d58b35; }
.nr { width: 20px; }
.f12 { width: 16px; height: 15px; margin: 0 2px; border: 1px solid #456; background: #fff; font-size: 7px; color: #234; }

.work { flex: 1; min-height: 0; display: flex; border-bottom: 2px solid #86a6d8; }
.sidetabs { width: 24px; flex: none; background: #89aad9; padding-top: 4px; border-right: 2px solid #7b98c4; position: relative; }
.st { display: block; width: 20px; height: 40px; margin-bottom: -2px; background: linear-gradient(90deg, #86b4f4, #b4d3fc); clip-path: polygon(0 10%, 70% 0, 100% 10%, 100% 72%, 60% 90%, 0 100%); writing-mode: vertical-rl; text-orientation: upright; font-size: 11px; padding-bottom: 4px; color: #0b1f44; }
.st.on { background: linear-gradient(90deg, #ffd48c, #fba93c); height: 42px; }
.meter { position: absolute; left: 0; bottom: -13px; width: 11px; height: 55px; border-radius: 0 3px 3px 0; z-index: 3; border: 3px solid #3a4a60; border-left: 0; background: linear-gradient(#44546a 55%, #62b090 55%); }

.sheet { flex: 1; min-width: 0; display: flex; flex-direction: column; }
.gridwrap { flex: 1; min-height: 0; overflow: hidden; background: #fff; }
.cells { width: 100%; table-layout: fixed; border-collapse: separate; border-spacing: 0; }
.w28 { width: 28px; } .w30 { width: 30px; } .w31 { width: 31px; } .w32 { width: 32px; } .w33 { width: 33px; } .w50 { width: 50px; } .w54 { width: 54px; } .w55 { width: 55px; } .w57 { width: 57px; } .w59 { width: 59px; } .w61 { width: 61px; } .w85 { width: 85px; }
.r18 { height: 18px; } .r20 { height: 20px; } .r22 { height: 22px; } .r23 { height: 23px; } .r24 { height: 24px; } .r28 { height: 28px; } .r35 { height: 35px; } .r36 { height: 36px; } .r50 { height: 50px; } .r64 { height: 64px; } .r78 { height: 78px; }
.cells td, .cells th { padding: 0; overflow: hidden; }
.cells td { border-right: 1px solid #9a9a9a; border-bottom: 1px solid #9a9a9a; text-align: center; font: 9px/14px "DejaVu Sans Mono", "Noto Sans CJK SC", monospace; white-space: nowrap; padding-top: 2px; }
.cells th { font: 14px/15px "Liberation Serif", serif; color: #47566e; background: #dfe8f6; vertical-align: bottom; border-right: 1px solid #a8bad6; border-bottom: 1px solid #b9c8de; }
.cells thead th { background: linear-gradient(#f3f6fb, #d5deec); border-bottom: 1px solid #9ab0d0; border-right-color: #b0bfd6; }
.cells thead .corner { background: linear-gradient(135deg, #a9c5f0 60%, #dde9fb 60%); }
.cells td.ol { background: #d7e5f5; border-bottom: 0; border-right: 1px solid #c0d2ea; padding-top: 0; }
.levels div { display: flex; padding-left: 2px; }
.levels button { width: 13px; height: 13px; border: 1px solid #6f8cb8; font: 8px/11px "DejaVu Sans", sans-serif; }
.cells td.name { text-align: left; padding-left: 2px; font-size: 11px; border-right: 0; }
.cells .cap td { background: #d9d9d9; font-size: 11px; line-height: 13px; white-space: normal; border-bottom-color: #555; padding-top: 1px; }
.cells .cap td.ol { background: #d7e5f5; border-bottom: 1px solid #456; }
.cells td.cn { font-size: 11px; }
.cells td.cn span { font-size: 9px; }
.cells td.l, .cells td.f { text-align: left; padding-left: 1px; }
.cells td.f { padding-left: 3px; border-right: 0; }
.f b { font-weight: 400; color: #1414c8; }
.cells .sel td { background: #c3d1ed; color: #444; border-bottom-color: #555; border-top: 1px solid #777; }
.cells .sel td.ol { background: #e9c9e4; border-top: 1px solid #223; border-bottom: 1px solid #223; }
.cells .sel td.f { background: linear-gradient(90deg, #c3d1ed calc(100% - 5px), #445 0, #445 calc(100% - 4px), #dfe6f4 0); }
.cells td.note { background-image: linear-gradient(45deg, transparent 50%, #d81c34 50%); background-size: 5px 5px; background-repeat: no-repeat; background-position: right top; }

.sheetbar { height: 15px; flex: none; display: flex; align-items: stretch; background: #9cb9e2; border-top: 1px solid #7f9ac4; color: #1d3564; }
.sheetnav { width: 58px; display: flex; align-items: center; justify-content: space-around; background: #cfe0f7; }
.tab { width: 68px; font-size: 13px; line-height: 13px; text-align: center; background: #b8d0f2; clip-path: polygon(0 0, 100% 0, calc(100% - 8px) 100%, 0 100%); }
.tab.wide { width: 90px; }
.tab.add { width: 35px; padding-left: 8px; }
.tab.on { background: #fff; width: 70px; }
.hscroll { flex: 1; display: flex; align-items: center; justify-content: flex-end; color: #2b4d8c; background: linear-gradient(#a4c0e6, #7b9aca); }
.grip { width: 5px; height: 12px; background: #fff; border-right: 2px solid #6684b4; margin-right: 8px; }
.thumb { width: 185px; height: 13px; border: 1px solid #5f7cab; border-radius: 2px; background: linear-gradient(#f2f6fc, #c9d7ec); text-align: center; font-size: 8px; line-height: 10px; color: #788cac; margin: 0 118px 0 3px; }
.vscroll { width: 16px; flex: none; background: linear-gradient(90deg, #6f8fc2, #86a4d2); color: #2b4677; text-align: center; }

.cadpane { width: 31.400%; flex: none; display: flex; flex-direction: column; border-left: 4px solid #9dbdea; }
.panetitle { height: 18px; flex: none; display: flex; align-items: center; gap: 4px; padding: 0 2px 0 5px; background: linear-gradient(#dceafd, #bdd6f8); color: #2c4f86; }
.panetitle h2 { flex: 1; font-size: 12px; white-space: nowrap; }
.panebody { flex: 1; min-height: 0; display: flex; }
.strip { width: 24px; flex: none; background: #e3e6f6; display: flex; flex-direction: column; align-items: center; gap: 5px; padding-top: 8px; overflow: hidden; }
.strip svg, .strip .rnd { width: 15px; height: 15px; flex: none; }
.strip .rnd { width: 16px; height: 17px; border: 1px solid #111; border-radius: 8px; background: #fff; font: 700 10px/14px "Noto Sans CJK SC", sans-serif; }
.strip hr { width: 15px; height: 6px; margin: 0; border: 0; flex: none; }
.strip .last { margin-top: auto; margin-bottom: 14px; }
.strip .blue { color: #4b83cc; }
.cad { flex: 1; min-width: 0; display: flex; flex-direction: column; background: #6a6a6a; overflow: hidden; }
.cadtop { height: 22px; flex: none; display: flex; align-items: center; gap: 6px; padding-left: 42px; position: relative; background: linear-gradient(#555, #7e7e7e); color: #222; }
.cadtop > svg { width: 15px; height: 15px; }
.cadtop > i { width: 2px; height: 2px; background: #444; }
.w { color: #eee; } .g { color: #aaa; }
.alogo { position: absolute; left: -4px; top: 0; width: 38px; height: 38px; background: linear-gradient(#bdbdbd, #777); border: 1px solid #222; z-index: 1; }
.dd { width: 10px; }
.docname { flex: 1; height: 20px; line-height: 18px; background: #8f8f8f; color: #ececec; padding-left: 12px; white-space: nowrap; overflow: hidden; font-size: 11px; }
.cwb { display: flex; gap: 5px; height: 20px; align-items: center; background: #8f8f8f; margin-left: -6px; }
.cwb svg { width: 12px; height: 12px; }
.cadtabs { height: 19px; flex: none; display: flex; align-items: flex-end; padding-left: 38px; background: #393939; color: #f0f0f0; }
.cadtabs a { padding: 0 10px; height: 17px; line-height: 17px; }
.cadtabs a.on { background: #f1f1f1; color: #222; }
.cadtabs button { margin: 0 2px 4px auto; width: 12px; height: 8px; border-radius: 3px; background: #eee; color: #333; font-size: 7px; line-height: 7px; }
.ribbon { height: 91px; flex: none; display: flex; background: linear-gradient(#fdfdfd, #ededed); overflow: hidden; color: #444; }
.ribbon button { width: 57px; flex: none; display: flex; flex-direction: column; align-items: center; padding-top: 3px; border-right: 2px solid #bbb; line-height: 18px; }
.ribbon svg { width: 32px; height: 32px; margin-bottom: 2px; }
.ribbon i { margin-top: auto; line-height: 14px; color: #222; }
.cadtools { height: 33px; flex: none; background: #666; padding: 5px 0 5px 3px; }
.cadtools div { display: flex; align-items: center; gap: 6px; height: 23px; padding-left: 4px; background: #ececec; color: #444; overflow: hidden; }
.cadtools svg { width: 16px; height: 16px; }
.cadtools s { width: 1px; height: 17px; background: #888; margin: 0; flex: none; }
.cadtools i { width: 5px; font-size: 8px; }
.drawrow { flex: 1; min-height: 0; display: flex; }
.drawstrip { width: 25px; flex: none; background: #e6e6e6; border-right: 6px solid #5a5a5a; display: flex; flex-direction: column; align-items: center; gap: 5px; overflow: hidden; }
.drawstrip i { width: 15px; height: 5px; border-bottom: 2px solid #888; flex: none; }
.drawstrip svg { width: 16px; height: 16px; }
.canvas { flex: 1; min-width: 0; position: relative; background: #000; overflow: hidden; }
.plan { width: 100%; height: 100%; }
.room { font: 300 17px "Noto Sans CJK SC", sans-serif; fill: #bdbdbd; }
.palette { position: absolute; left: 42px; right: 0; top: 40px; height: 94px; display: flex; background: #3c3c3c; color: #222; }
.pgrip { width: 7px; margin: 3px 5px 62px 4px; flex: none; background: radial-gradient(#ccc 35%, transparent 40%) 0 0 / 3px 4px; }
.pbody { flex: 1; min-width: 0; background: #f2f2f2; padding: 2px; }
.pend { width: 10px; }
.ptop { display: flex; gap: 5px; position: relative; margin-bottom: 7px; }
.ptop select { flex: 1; height: 22px; appearance: none; border: 1px solid #777; border-radius: 2px; padding-left: 3px; background: linear-gradient(#f2f2f2, #dcdcdc); font-size: 11px; }
.ptop button { width: 22px; height: 21px; border: 1px solid #777; border-radius: 3px; padding-left: 3px; }
.parr { position: absolute; right: 31px; top: 8px; width: 8px; height: 6px; }
.pbody table { width: 100%; border-collapse: collapse; table-layout: fixed; }
.pbody th { width: 103px; text-align: left; font-weight: 400; background: #efefef; }
.pbody td { background: #fff; white-space: nowrap; overflow: hidden; }
.pbody td, .pbody th { height: 20px; padding: 0 2px; border: 1px solid #8b8b8b; line-height: 17px; }
.modeltabs { height: 16px; flex: none; background: #efefef; border-bottom: 1px solid #888; }
.cmdlog { height: 42px; flex: none; background: #fff; border-top: 2px solid #666; border-bottom: 1px solid #aaa; }
.cmd { height: 17px; flex: none; display: flex; align-items: center; justify-content: space-between; background: #f4f4f4; padding: 0 10px; font: 12px/14px "Noto Sans CJK SC", sans-serif; overflow: hidden; }
.cmd input { width: 200px; height: 12px; }
.cadstatus { height: 17px; flex: none; display: flex; align-items: center; gap: 4px; background: linear-gradient(#7a7a7a, #9a9a9a); padding-left: 7px; font: 10px "Liberation Mono", monospace; }
.cadstatus span { width: 143px; }
.cadstatus svg { width: 17px; height: 15px; }
.lit { background: #bcdce0; }

.statusbar { height: 19px; flex: none; display: flex; align-items: center; background: linear-gradient(#e6f0fd, #c7dbf7); color: #263f6c; font-size: 12px; padding-left: 12px; }
.rev { width: 31px; border-right: 1px solid #9ab4d8; line-height: 15px; }
.chk { width: 57px; display: flex; align-items: center; gap: 5px; padding-left: 6px; border-right: 1px solid #b4c8e6; line-height: 15px; }
.chk input { width: 12px; height: 12px; appearance: none; border: 1px solid #9aa8bc; background: #eef2f8; display: grid; place-items: center; }
.chk input:checked::before { content: "✓"; font: 700 10px/10px "DejaVu Sans", sans-serif; color: #456; }
.wr { width: 14px; height: 14px; margin: 0 3px; }
.syms { width: 560px; height: 19px; display: flex; align-items: center; font: 11px "Liberation Mono", "Noto Sans CJK SC", monospace; border-right: 1px solid #a8bfe2; }
.syms button { flex: 1 1 0; min-width: 0; height: 19px; line-height: 19px; text-align: center; }
.syms .two { flex-grow: 2; }
.views { margin-left: auto; display: flex; background: #b9cff0; padding-left: 4px; height: 17px; }
.views button { width: 18px; display: flex; align-items: center; justify-content: center; background: #d6e2f2; }
.views .on { background: #fcd468; }
.views svg { width: 13px; height: 13px; }
.zoom { padding: 0 7px; width: 156px; height: 19px; line-height: 18px; background: linear-gradient(#cfe0f8, #8fb0e4); }
.plus { width: 15px; height: 15px; border-radius: 8px; background: #e8f0fc; border: 1px solid #68a; line-height: 12px; }

.taskbar { height: 37px; flex: none; display: flex; align-items: center; padding-left: 7px; border-top: 1px solid #5f7088; background: linear-gradient(90deg, #8194ab, #8396b0 42%, #a6bfdd 44%, #a6bfdd 64%, #7f90aa 67%, #8093ae); }
.start { width: 36px; }
.start svg { width: 35px; height: 35px; }
.apps { display: flex; gap: 4px; margin-left: 257px; flex: 1; }
.apps button { width: 54px; height: 35px; display: flex; align-items: center; justify-content: center; position: relative; border: 1px solid #56687f; border-radius: 3px; background: linear-gradient(#bccbdc, #9db0c6); box-shadow: inset 0 0 0 1px #d4dfea; }
.apps .hot { background: linear-gradient(#edf0f4, #c8d2de); }
.apps svg { width: 29px; height: 27px; }
.apps b { position: absolute; font: 12px "Liberation Sans", sans-serif; color: #fff; }
.tray { display: flex; align-items: center; gap: 6px; padding-right: 14px; }
.tray svg { width: 15px; height: 15px; }
.tray .ac { width: 24px; height: 24px; }
.clock { width: 66px; margin: 0 6px 0 12px; display: flex; flex-direction: column; text-align: center; color: #f4f7fb; line-height: 16px; font-size: 11px; }

.ocam { position: absolute; left: 813px; top: 507px; width: 419px; height: 128px; display: flex; flex-direction: column; padding: 0 6px 6px; border: 1px solid #262626; border-radius: 4px 4px 0 0; background: linear-gradient(#606060, #383838 22px, #45443f); }
.ocam header { height: 24px; flex: none; display: flex; align-items: center; gap: 6px; color: #eee; }
.ocam h2 { flex: 1; font: 700 11px "Open Sans", sans-serif; }
.ocam header button { width: 13px; font-size: 10px; font-weight: 700; }
.ocam nav { height: 27px; flex: none; display: flex; background: #eeebe8; border-bottom: 1px solid #c5c2c0; }
.ocam nav button { width: 77px; margin-top: 3px; height: 23px; border: 1px solid #bbb; border-bottom: 0; background: #e9e7e4; padding-bottom: 5px; }
.ocam nav button:first-child { width: 57px; }
.ocam nav .on { background: #f6f4f2; margin-top: 1px; height: 26px; }
.ocam nav .off { background: #d6d4d2; color: #777; }
.obody { flex: 1; min-height: 0; display: flex; align-items: center; background: linear-gradient(#f3f1ef, #dedbd7); padding-left: 8px; }
.obody button { width: 66px; display: flex; flex-direction: column; align-items: center; line-height: 16px; }
.obody svg { width: 44px; height: 44px; }
.read { display: flex; flex-direction: column; padding-left: 4px; font-family: "Open Sans", sans-serif; }
.read strong { font-weight: 400; font-size: 26px; line-height: 34px; color: #111; }
.read span { font-size: 15px; line-height: 26px; }

.netball { position: absolute; left: 1147px; top: 639px; width: 118px; height: 44px; display: flex; align-items: center; z-index: 4; }
.netball b { width: 44px; height: 44px; flex: none; z-index: 1; border-radius: 22px; border: 2px solid #c8d8cc; background: linear-gradient(#16825c 62%, #3fce5c 62%); color: #fff; text-align: center; font: 13px/38px "Liberation Sans", sans-serif; }
.rates { flex: 1; height: 34px; margin-left: -20px; padding: 3px 0 0 26px; border-radius: 0 17px 17px 0; background: #e4e6e8; border: 1px solid #c0c4c8; font-size: 9px; line-height: 14px; }
.rates span { display: flex; gap: 14px; }
.rates i { width: 10px; font-weight: 700; } .u { color: #e04830; } .d { color: #30a858; }
.netball button { width: 15px; height: 15px; flex: none; margin-left: -23px; margin-right: 8px; border-radius: 8px; background: #3478d8; color: #fff; font-weight: 700; line-height: 13px; }
.cursor { position: absolute; left: 643px; top: 552px; width: 12px; height: 19px; }
```
